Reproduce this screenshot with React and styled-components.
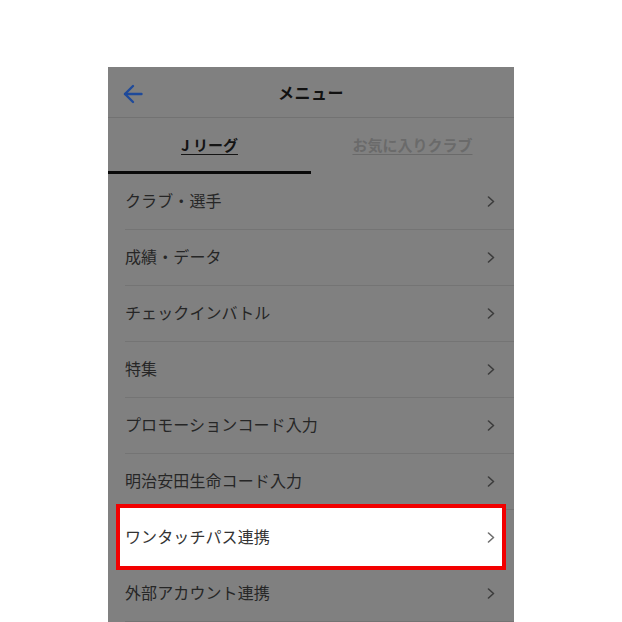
import React from 'react'
import styled, { createGlobalStyle } from 'styled-components'

const GlobalStyle = createGlobalStyle`
  html, body {
    margin: 0;
    padding: 0;
    background: #ffffff;
  }
  body {
    font-family: "Noto Sans CJK JP", "Noto Sans", sans-serif;
  }
`

const Page = styled.div`
  width: 622px;
  height: 622px;
  overflow: hidden;
  display: flex;
  justify-content: center;
  padding-top: 67px;
  box-sizing: border-box;
`

const Screen = styled.div`
  width: 406px;
  background: #808080;
  display: flex;
  flex-direction: column;
  align-self: flex-start;
`

const Header = styled.div`
  height: 50px;
  border-bottom: 1px solid #727272;
  display: grid;
  grid-template-columns: 60px 1fr 60px;
  align-items: center;
`

const BackButton = styled.div`
  display: flex;
  align-items: center;
  padding-left: 15px;
  padding-top: 4px;
  color: #1f4a9a;
`

const Title = styled.h1`
  margin: 0;
  text-align: center;
  font-size: 16px;
  font-weight: 700;
  color: #111;
  letter-spacing: 0.5px;
`

const Tabs = styled.div`
  display: grid;
  grid-template-columns: 1fr 1fr;
  height: 56px;
`

const Tab = styled.div`
  display: flex;
  align-items: center;
  justify-content: center;
  padding-bottom: 1px;
  border-bottom: 3px solid ${({ active }) => (active ? '#0a0a0a' : 'transparent')};
  box-sizing: border-box;
`

const TabLabel = styled.span`
  font-size: 15px;
  font-weight: 700;
  color: ${({ active }) => (active ? '#141414' : '#6a6a6a')};
  text-decoration: underline;
  text-underline-offset: 3px;
  text-decoration-thickness: 1px;
`

const List = styled.ul`
  list-style: none;
  margin: 0;
  padding: 0;
`

const Row = styled.li`
  position: relative;
  height: 56px;
  padding: 0 0 0 17px;
  display: flex;
  align-items: stretch;
  z-index: ${({ highlight }) => (highlight ? 1 : 0)};

  &::before {
    content: '';
    display: ${({ highlight }) => (highlight ? 'block' : 'none')};
    position: absolute;
    left: 8px;
    right: 8px;
    top: -6px;
    bottom: -4px;
    background: #ffffff;
    border: 4px solid #f20000;
  }
`

const RowInner = styled.div`
  position: relative;
  flex: 1;
  display: flex;
  align-items: center;
  justify-content: space-between;
  padding-right: 19px;
  padding-bottom: 3px;
  border-bottom: 1px solid ${({ highlight }) => (highlight ? 'transparent' : '#747474')};
`

const Label = styled.span`
  font-size: 16px;
  font-weight: 400;
  color: ${({ highlight }) => (highlight ? '#333333' : '#262626')};
  letter-spacing: 0.1px;
`

const Chevron = styled.span`
  display: flex;
  padding-top: 2px;
  color: ${({ highlight }) => (highlight ? '#6e6e6e' : '#3c3c3c')};
`

const items = [
  'クラブ・選手',
  '成績・データ',
  'チェックインバトル',
  '特集',
  'プロモーションコード入力',
  '明治安田生命コード入力',
  'ワンタッチパス連携',
  '外部アカウント連携',
]

const ArrowLeft = () => (
  <svg width="20" height="20" viewBox="0 0 20 20" fill="none" stroke="currentColor" strokeWidth="2.4" strokeLinecap="round" strokeLinejoin="round">
    <path d="M18.5 10H2" />
    <path d="M10 2L2 10l8 8" />
  </svg>
)

const ChevronRight = () => (
  <svg width="8" height="11" viewBox="0 0 8 11" fill="none" stroke="currentColor" strokeWidth="1.6" strokeLinecap="round" strokeLinejoin="round">
    <path d="M1.5 1l5 4.5-5 4.5" />
  </svg>
)

const App = () => {
  return (
    <Page>
      <GlobalStyle />
      <Screen>
        <Header>
          <BackButton>
            <ArrowLeft />
          </BackButton>
          <Title>メニュー</Title>
          <div />
        </Header>
        <Tabs>
          <Tab active>
            <TabLabel active>J リーグ</TabLabel>
          </Tab>
          <Tab>
            <TabLabel>お気に入りクラブ</TabLabel>
          </Tab>
        </Tabs>
        <List>
          {items.map((item) => {
            const hl = item === 'ワンタッチパス連携'
            return (
              <Row key={item} highlight={hl}>
                <RowInner highlight={hl}>
                  <Label highlight={hl}>{item}</Label>
                  <Chevron highlight={hl}>
                    <ChevronRight />
                  </Chevron>
                </RowInner>
              </Row>
            )
          })}
        </List>
      </Screen>
    </Page>
  )
}

export default App
